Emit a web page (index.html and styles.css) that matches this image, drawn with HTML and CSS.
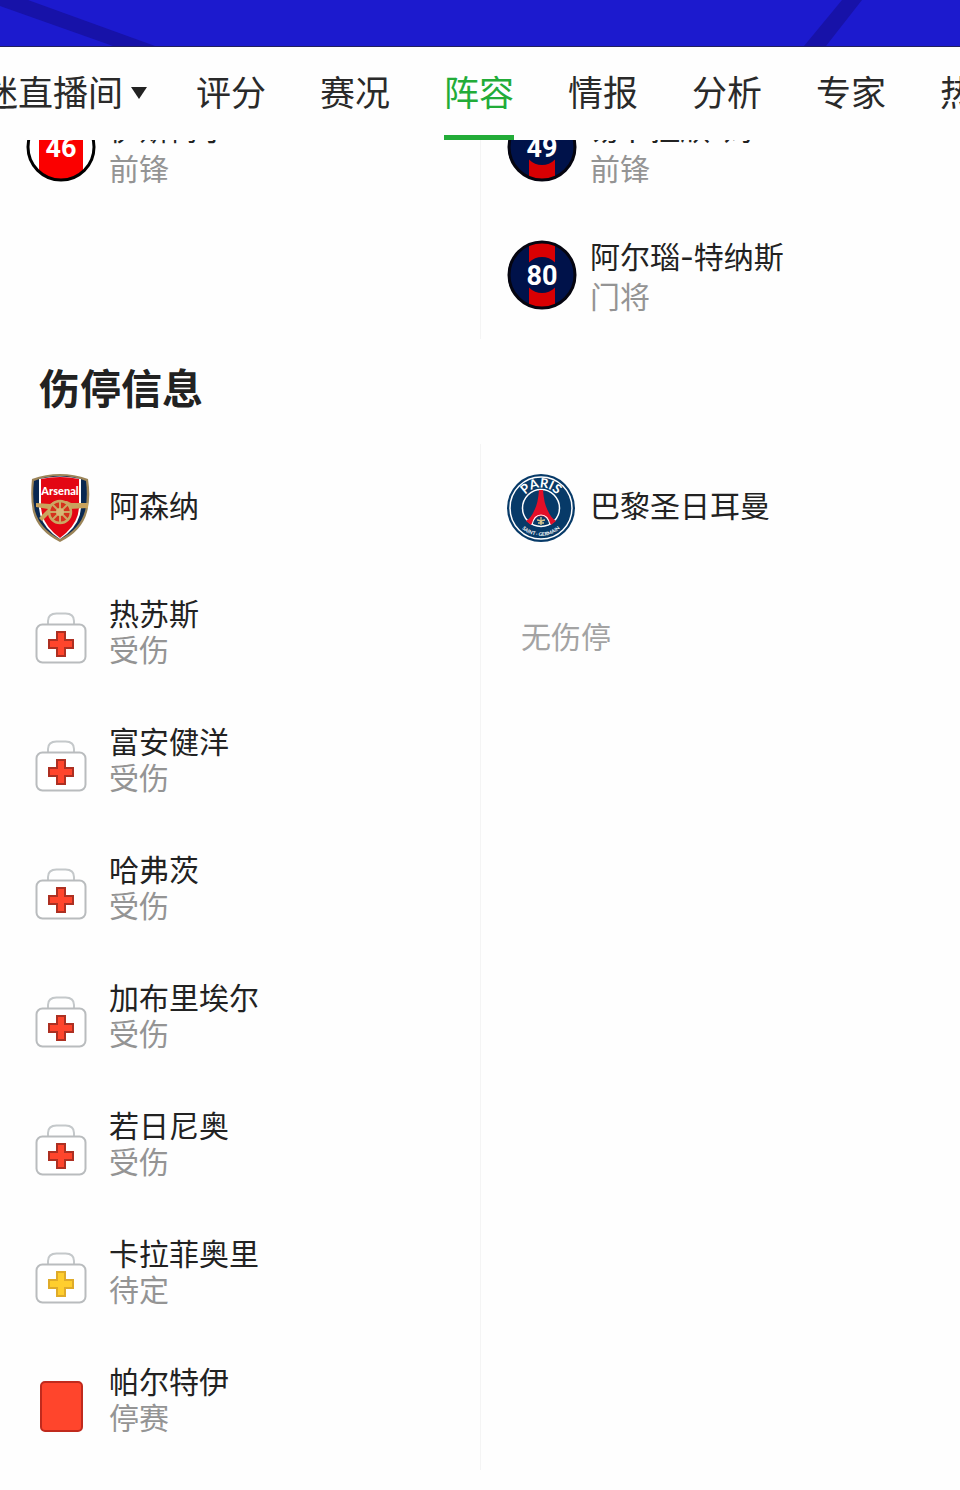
FILE: index.html
```html
<!DOCTYPE html>
<html lang="zh-CN">
<head>
<meta charset="utf-8">
<meta name="viewport" content="width=device-width, initial-scale=1">
<title>阵容</title>
<link rel="stylesheet" href="styles.css">
</head>
<body>
<svg class="defs" aria-hidden="true">
  <symbol id="kit" viewBox="0 0 52 52">
    <path d="M13 12.500V9q0-7.500 8.500-7.500h9Q39 1.500 39 9v3.500" fill="none" stroke="#c4c8ca" stroke-width="2"/>
    <rect x="1.500" y="12.500" width="49" height="38" rx="6" fill="#fff" stroke="#b9bcbe" stroke-width="2"/>
    <path d="M22 20h8v8h8v8h-8v8h-8v-8h-8v-8h8z" fill="currentColor" stroke="var(--edge)" stroke-width="2"/>
  </symbol>
  <symbol id="psg-shirt" viewBox="0 0 70 70">
    <circle cx="35" cy="35" r="33" fill="#00124a"/>
    <path d="M22 3h26v64H22z" fill="#d80003"/>
    <circle cx="35" cy="35" r="18" fill="#00124a"/>
    <circle cx="35" cy="35" r="33" fill="none" stroke="#050510" stroke-width="3"/>
  </symbol>
</svg>

<header class="banner">
  <svg class="banner-art" viewBox="0 0 960 46" preserveAspectRatio="none" aria-hidden="true">
    <path d="M0 0h28L155 46h-42L0 6z" fill="#1712a8"/>
    <path d="M842 0h20L826 46h-22z" fill="#1712a8"/>
  </svg>
</header>

<nav class="tabs" aria-label="比赛">
  <a class="tab tab-menu" href="#room">球迷直播间<svg class="caret" viewBox="0 0 16 16" aria-hidden="true"><path d="M0 4h16L8 16z" fill="#222"/></svg></a>
  <a class="tab" href="#rating">评分</a>
  <a class="tab" href="#live">赛况</a>
  <a class="tab active" href="#lineup" aria-current="page">阵容</a>
  <a class="tab" href="#news">情报</a>
  <a class="tab" href="#analysis">分析</a>
  <a class="tab" href="#expert">专家</a>
  <a class="tab" href="#hot">热议</a>
</nav>

<main>
  <section class="columns bench">
    <ul class="column">
      <li class="row">
        <svg class="mark" viewBox="0 0 70 70" aria-hidden="true">
          <circle cx="35" cy="35" r="33" fill="#fff"/>
          <path d="M13 11Q35-7 57 11V59Q35 77 13 59z" fill="#fb0000"/>
          <circle cx="35" cy="35" r="33" fill="none" stroke="#000" stroke-width="3"/>
          <text class="number" x="35" y="45">46</text>
        </svg>
        <div class="who"><span class="name">伊斯梅尔</span><span class="note">前锋</span></div>
      </li>
    </ul>
    <ul class="column">
      <li class="row">
        <svg class="mark" viewBox="0 0 70 70" aria-hidden="true"><use href="#psg-shirt"/><text class="number" x="35" y="45">49</text></svg>
        <div class="who"><span class="name">易卜拉欣-姆…</span><span class="note">前锋</span></div>
      </li>
      <li class="row">
        <svg class="mark" viewBox="0 0 70 70" aria-hidden="true"><use href="#psg-shirt"/><text class="number" x="35" y="45">80</text></svg>
        <div class="who"><span class="name">阿尔瑙-特纳斯</span><span class="note">门将</span></div>
      </li>
    </ul>
  </section>

  <h2 class="title">伤停信息</h2>

  <section class="columns injuries">
    <div class="column">
      <h3 class="row team">
        <svg class="mark" viewBox="0 0 70 70" aria-hidden="true">
          <path d="M6 6Q20 1 34 1T62 6Q65 25 61 39Q56 58 34 69Q12 58 7 39Q4 25 6 6z" fill="#9b8458"/>
          <path d="M8 8Q20 3 34 3T60 8Q62 25 59 38Q54 56 34 66Q14 56 9 38Q6 25 8 8z" fill="#092851"/>
          <path d="M13 6Q34 1 55 6V35Q54 50 41 61L34 66L27 61Q14 50 13 35z" fill="#fff"/>
          <path d="M15 6Q34 2 53 6V35Q52 49 40 60L34 65L28 60Q16 49 15 35z" fill="#e30613"/>
          <text class="crest-arsenal" x="34" y="22">Arsenal</text>
          <path d="M10 30l14 1 5-3h12l4 2h17v5l-19 1-6 2H26l-10 10-3-3 9-9-12-2z" fill="#c9a35d"/>
          <circle cx="34" cy="39" r="11" fill="#d5301c" stroke="#cba763" stroke-width="2.500"/>
          <path d="M34 28v22M23 39h22M26 31l16 16M42 31L26 47" stroke="#cba763" stroke-width="2"/>
          <circle cx="34" cy="39" r="4" fill="#d8b675"/>
        </svg>
        <span class="name">阿森纳</span>
      </h3>
      <ul class="list">
        <li class="row"><svg class="mark kit" aria-hidden="true"><use href="#kit"/></svg><div class="who"><span class="name">热苏斯</span><span class="note">受伤</span></div></li>
        <li class="row"><svg class="mark kit" aria-hidden="true"><use href="#kit"/></svg><div class="who"><span class="name">富安健洋</span><span class="note">受伤</span></div></li>
        <li class="row"><svg class="mark kit" aria-hidden="true"><use href="#kit"/></svg><div class="who"><span class="name">哈弗茨</span><span class="note">受伤</span></div></li>
        <li class="row"><svg class="mark kit" aria-hidden="true"><use href="#kit"/></svg><div class="who"><span class="name">加布里埃尔</span><span class="note">受伤</span></div></li>
        <li class="row"><svg class="mark kit" aria-hidden="true"><use href="#kit"/></svg><div class="who"><span class="name">若日尼奥</span><span class="note">受伤</span></div></li>
        <li class="row"><svg class="mark kit doubtful" aria-hidden="true"><use href="#kit"/></svg><div class="who"><span class="name">卡拉菲奥里</span><span class="note">待定</span></div></li>
        <li class="row"><svg class="mark kit" viewBox="0 0 52 52" aria-hidden="true"><rect x="6" y="2" width="41" height="49" rx="4" fill="#ff452c" stroke="#c02a1d" stroke-width="2"/></svg><div class="who"><span class="name">帕尔特伊</span><span class="note">停赛</span></div></li>
      </ul>
    </div>
    <div class="column">
      <h3 class="row team">
        <svg class="mark" viewBox="0 0 70 70" aria-hidden="true">
          <defs>
            <path id="arc-top" d="M13.500 35a20.500 20.500 0 0 1 41 0"/>
            <path id="arc-bottom" d="M6 35a28 28 0 0 0 56 0"/>
          </defs>
          <circle cx="34" cy="35" r="34" fill="#073a68"/>
          <circle cx="34" cy="35" r="31" fill="none" stroke="#fff" stroke-width="1.500"/>
          <circle cx="34" cy="35" r="18.500" fill="#073a68" stroke="#fff" stroke-width="1.500"/>
          <path d="M32 17h4q1 14 5 21 3 7 8 10l-5 4q-4-9-10-9t-10 9l-5-4q5-3 8-10 4-7 5-21z" fill="#e30f28"/>
          <path d="M25 52q2-10 9-10t9 10" fill="none" stroke="#fff" stroke-width="1.200"/>
          <path d="M34 44v8M30 47q4 0 4 3 0-3 4-3M31 50h6" fill="none" stroke="#d9c88e" stroke-width="1.300"/>
          <text class="crest-paris"><textPath href="#arc-top" startOffset="50%">PARIS</textPath></text>
          <text class="crest-germain"><textPath href="#arc-bottom" startOffset="50%">SAINT · GERMAIN</textPath></text>
        </svg>
        <span class="name">巴黎圣日耳曼</span>
      </h3>
      <p class="empty">无伤停</p>
    </div>
  </section>
</main>
</body>
</html>
```
FILE: styles.css
```css
* {
  box-sizing: border-box;
}

body {
  margin: 0;
  background: #fefefe;
  color: #222;
  font-family: Inter, "Noto Sans CJK SC", sans-serif;
  font-size: 30px;
  line-height: 36px;
  overflow-x: hidden;
}

ul,
h2,
h3,
p {
  margin: 0;
  padding: 0;
  list-style: none;
  font-weight: 400;
  font-size: inherit;
}

.defs {
  display: none;
}

.banner {
  height: 47px;
  background: #1c1ace;
  border-bottom: 1px solid #22205e;
}

.banner-art {
  display: block;
  width: 100%;
  height: 46px;
}

.tabs {
  position: relative;
  z-index: 1;
  display: flex;
  height: 93px;
  overflow: hidden;
  background: #fefefe;
}

.tab {
  flex: none;
  display: flex;
  align-items: center;
  border-bottom: 5px solid transparent;
  color: #2a2a2a;
  font-family: "Noto Sans CJK SC", sans-serif;
  font-size: 35px;
  line-height: 88px;
  text-decoration: none;
  white-space: nowrap;
}

.tab + .tab {
  margin-left: 54px;
}

.tab-menu {
  gap: 8px;
  margin-left: -52px;
}

.tab-menu + .tab {
  margin-left: 49px;
}

.active {
  border-color: #22ac38;
  color: #22ac38;
}

.caret {
  width: 16px;
  height: 16px;
}

.columns {
  display: grid;
  grid-template-columns: 1fr 1fr;
}

.column + .column {
  border-left: 1px solid #f4f4f4;
}

/* The list is scrolled partly beneath the tab bar. */
.bench {
  margin-top: -57px;
}

.row {
  display: flex;
  align-items: center;
  gap: 13px;
  height: 128px;
  padding-left: 26px;
}

.mark {
  flex: none;
  width: 70px;
  height: 70px;
}

.kit {
  --edge: #ad3022;
  padding: 9px;
  color: #ff452c;
}

.doubtful {
  --edge: #dfab2a;
  color: #ffce2e;
}

.who {
  display: flex;
  flex-direction: column;
}

.name {
  color: #222;
}

.note {
  color: #949494;
}

.bench .who {
  line-height: 40px;
  padding-top: 4px;
}

.team .name {
  padding-bottom: 4px;
}

.list {
  padding-top: 2px;
}

.list .who {
  padding-bottom: 12px;
}

.title {
  padding: 17px 39px 28px;
  font-family: "Noto Sans CJK SC", sans-serif;
  font-size: 41px;
  line-height: 60px;
  font-weight: 700;
}

.empty {
  padding: 47px 40px;
  color: #a3a3a3;
}

.number {
  fill: #fff;
  font: 700 27px Roboto, sans-serif;
  text-anchor: middle;
}

.crest-arsenal {
  fill: #fff;
  font: 900 11px Lato, sans-serif;
  text-anchor: middle;
}

.crest-paris {
  fill: #fff;
  font: 700 13px Lato, sans-serif;
  text-anchor: middle;
}

.crest-germain {
  fill: #fff;
  font: 700 5px Lato, sans-serif;
  text-anchor: middle;
}
```
